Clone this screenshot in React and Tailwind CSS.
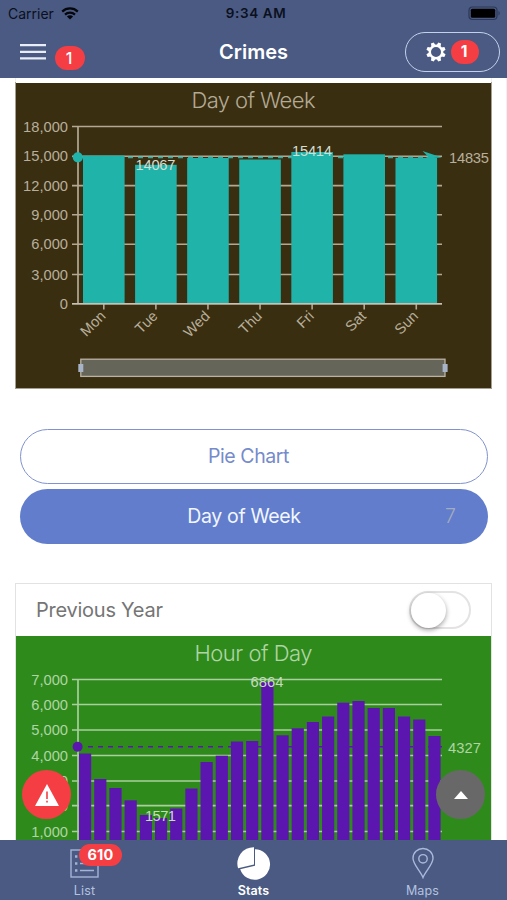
import React from 'react';

const DAYS = [
  ['Mon', 155.5],
  ['Tue', 164.8],
  ['Wed', 158],
  ['Thu', 159.5],
  ['Fri', 152],
  ['Sat', 154.3],
  ['Sun', 157.8],
];

const DAY_TICKS = [
  ['18,000', 126.5],
  ['15,000', 156.3],
  ['12,000', 185.6],
  ['9,000', 214.8],
  ['6,000', 244.3],
  ['3,000', 274.5],
  ['0', 303.8],
];

const HOUR_TOPS = [
  753.5, 779, 788, 800.3, 815, 818, 808.5, 788.5, 762, 755.7, 741.5, 741,
  682, 735.3, 728.3, 722, 716.5, 702.7, 701, 708, 708, 716.5, 719.5, 736,
];

const HOUR_TICKS = [
  ['7,000', 679.5],
  ['6,000', 704.5],
  ['5,000', 730],
  ['4,000', 755.5],
  ['3,000', 781],
  ['2,000', 805.7],
  ['1,000', 831.5],
];

function DayChart() {
  return (
    <svg viewBox="16 83 475 305" className='block h-[305px] w-[475px] bg-[#3a2e10] font-["Liberation_Sans",sans-serif]'>
      <text x="253.5" y="108" textAnchor="middle" textLength="124" className='fill-[#b3aa96] font-["Inter",sans-serif] text-[22px] font-light'>Day of Week</text>
      {DAY_TICKS.map(([label, y]) => (
        <g key={label}>
          <text x="68" y={y + 5} textAnchor="end" className="fill-[#b8ae9c] text-[14.7px]">{label}</text>
          <line x1="72" x2="442" y1={y} y2={y} stroke="#b4a894" strokeWidth="1.6" />
        </g>
      ))}
      <line x1="78" x2="78" y1="126" y2="304" stroke="#b4a894" strokeWidth="1.7" />
      {DAYS.map(([label, top], i) => {
        const x = 83 + i * 52.08;
        return (
          <g key={label}>
            <rect x={x} y={top} width="41.6" height={303.2 - top} fill="#1fb3aa" />
            <line x1={x + 20.8} x2={x + 20.8} y1="304" y2="309.5" stroke="#b4a894" strokeWidth="1.6" />
            <text transform={`translate(${x + 23.5} 317) rotate(-45)`} textAnchor="end" className="fill-[#b8ae9c] text-[14.7px]">{label}</text>
          </g>
        );
      })}
      <line x1="72" x2="442" y1="303.8" y2="303.8" stroke="#c9c2b4" strokeWidth="1.6" />
      <line x1="78" x2="424" y1="157.5" y2="157.5" stroke="#1fb3aa" strokeWidth="1.7" strokeDasharray="5 5" />
      <circle cx="77.8" cy="157.3" r="5.1" fill="#1fb3aa" />
      <path d="M422.5 151 442 157.5 425 158.5 428 156.5Z" fill="#1fb3aa" />
      <text x="155.5" y="169.7" textAnchor="middle" textLength="40" className="fill-[#d3ddd2] text-[14.7px]">14067</text>
      <text x="312" y="156" textAnchor="middle" textLength="40" className="fill-[#d3ddd2] text-[14.7px]">15414</text>
      <text x="449" y="162.5" textLength="40" className="fill-[#b8ae9c] text-[14.7px]">14835</text>
      <rect x="80.8" y="359.2" width="364.2" height="17.2" fill="#66655a" stroke="#bbb2a5" strokeWidth="1.3" />
      <rect x="78.3" y="364" width="5" height="8" fill="#a7b4c8" />
      <rect x="442.6" y="364" width="5" height="8" fill="#a7b4c8" />
    </svg>
  );
}

function HourChart() {
  return (
    <svg viewBox="16 636 475 204" className='block h-[204px] w-[475px] bg-[#2f8a1c] font-["Liberation_Sans",sans-serif]'>
      <text x="253.5" y="661" textAnchor="middle" textLength="118" className='fill-[#b0d5a5] font-["Inter",sans-serif] text-[22px] font-light'>Hour of Day</text>
      {HOUR_TICKS.map(([label, y]) => (
        <g key={label}>
          <text x="68" y={y + 5} textAnchor="end" className="fill-[#b0d5a5] text-[14.7px]">{label}</text>
          <line x1="72" x2="442" y1={y} y2={y} stroke="#a8cf9d" strokeWidth="1.7" />
        </g>
      ))}
      <line x1="78" x2="78" y1="679" y2="840" stroke="#a8cf9d" strokeWidth="1.7" />
      {HOUR_TOPS.map((top, i) => (
        <rect key={i} x={79 + i * 15.19} y={top} width="12.2" height={841 - top} fill="#5c16b0" />
      ))}
      <line x1="88" x2="442" y1="746.7" y2="746.7" stroke="#5c16b0" strokeWidth="1.6" strokeDasharray="5 5" />
      <circle cx="77.6" cy="746.8" r="5" fill="#5c16b0" />
      <text x="267" y="687" textAnchor="middle" textLength="33" className="fill-[#c6dcc0] text-[14.7px]">6864</text>
      <text x="160.5" y="821.3" textAnchor="middle" textLength="31" className="fill-[#c6dcc0] text-[14.7px]">1571</text>
      <text x="448" y="752.5" textLength="33" className="fill-[#b0d5a5] text-[14.7px]">4327</text>
    </svg>
  );
}

function StatusBar() {
  return (
    <div className="grid h-[26px] grid-cols-3 items-center pt-px text-[13.5px] text-[#0b1020]">
      <div className="flex items-center gap-[7px] pl-2">
        <span className="text-[14px]">Carrier</span>
        <svg viewBox="0 0 18 13" className="h-[13px] w-[18px]" fill="none" stroke="#05070d" strokeWidth="2.2">
          <path d="M1.2 4.6a11.2 11.2 0 0 1 15.6 0M4 7.6a7.2 7.2 0 0 1 10 0" />
          <path d="M9 12.6 5.9 9.6a4.4 4.4 0 0 1 6.2 0Z" fill="#05070d" stroke="none" />
        </svg>
      </div>
      <div className="pl-[5px] text-center font-semibold tracking-[0.6px]">9:34 AM</div>
      <div className="flex justify-end pr-[6px]">
        <svg viewBox="0 0 33 15" className="h-[15px] w-[33px]">
          <rect x="1" y="1" width="28" height="12.5" rx="3.5" fill="none" stroke="#2c3858" strokeWidth="1.2" />
          <rect x="2.8" y="2.8" width="24.4" height="9" rx="1.5" fill="#000" />
          <path d="M30.5 5v4.6c1.6-.6 1.6-4 0-4.6Z" fill="#2c3858" />
        </svg>
      </div>
    </div>
  );
}

function GearIcon() {
  return (
    <svg viewBox="-10 -10 20 20" className="h-5 w-5">
      <circle r="6.2" fill="none" stroke="#fff" strokeWidth="2.4" />
      {[22.5, 67.5, 112.5, 157.5, 202.5, 247.5, 292.5, 337.5].map((a) => (
        <path key={a} d="M-2.2 -6.5-1.5 -9.7H1.5L2.2 -6.5Z" fill="#fff" transform={`rotate(${a})`} />
      ))}
    </svg>
  );
}

function NavBar() {
  return (
    <div className="grid h-[51px] grid-cols-[160px_1fr_160px] items-center">
      <div className="flex items-center pl-5">
        <svg viewBox="0 0 26 16" className="h-4 w-[26px]" stroke="#e8edf8" strokeWidth="2.2">
          <path d="M0 1.2h26M0 7.8h26M0 14.4h26" />
        </svg>
        <span className="mt-[13px] ml-[9px] flex h-6 w-[30px] items-center justify-center rounded-full bg-[#f43e43] pr-[2px] text-[16px] font-medium text-white">1</span>
      </div>
      <div className="text-center text-[20px] font-semibold text-white">Crimes</div>
      <div className="flex justify-end pr-[7px]">
        <button className="flex h-10 w-[95px] items-center justify-center gap-[5px] rounded-full border-[1.5px] border-[#c3d2ec] pr-px">
          <GearIcon />
          <span className="flex h-6 w-7 items-center justify-center rounded-full bg-[#f43e43] pr-px text-[15.5px] font-bold text-white">1</span>
        </button>
      </div>
    </div>
  );
}

function TabBar() {
  return (
    <nav className="grid h-[60px] grid-cols-3 bg-[#4a5a82] text-[12.5px] tracking-[0.15px] text-[#b4c2e0]">
      <div className="relative flex flex-col items-center pt-[9px]">
        <svg viewBox="0 0 29 29" className="h-[29px] w-[29px]" fill="none" stroke="#a4b4d8" strokeWidth="1.4">
          <rect x="1" y="1" width="27" height="27" />
          <path d="M10 7.5h14M10 14.5h14M10 21.5h14" />
          <path d="M5 7.5h2.4M5 14.5h2.4M5 21.5h2.4" strokeWidth="2.4" />
        </svg>
        <span className="mt-[4px] leading-[18px]">List</span>
        <span className="absolute top-[4px] left-[79px] flex h-[22px] w-[43px] items-center justify-center rounded-full bg-[#f43e43] text-[14.5px] font-bold text-white">610</span>
      </div>
      <div className="flex flex-col items-center pt-[6px] font-semibold text-white">
        <svg viewBox="237 846 34 34" className="h-[34px] w-[34px]">
          <path d="M255 849.2a15.3 15.3 0 1 1-14.8 20L255 865.7Z" fill="#fff" />
          <path d="M254 847.2v17.4l-15.9 3.7a16.2 16.2 0 0 1 15.9-21.1Z" fill="#fff" />
        </svg>
        <span className="mt-[2px] leading-[18px]">Stats</span>
      </div>
      <div className="flex flex-col items-center pt-[7px]">
        <svg viewBox="0 0 24 32" className="h-8 w-6" fill="none" stroke="#a9b9dc" strokeWidth="1.4">
          <path d="M12 30.5C9.5 24 2 17.5 2 11.3a10 9.8 0 0 1 20 0C22 17.5 14.5 24 12 30.5Z" />
          <circle cx="12" cy="11.8" r="4.2" />
        </svg>
        <span className="mt-[3px] leading-[18px]">Maps</span>
      </div>
    </nav>
  );
}

export default function App() {
  return (
    <div className='relative flex h-[900px] w-[507px] flex-col overflow-hidden bg-white font-["Inter",sans-serif]'>
      <header className="h-[78px] shrink-0 bg-[#4a5a82]">
        <StatusBar />
        <NavBar />
      </header>

      <main className="flex h-[762px] shrink-0 flex-col overflow-hidden border-r border-[#f0f0f2]">
        <section className="ml-[15px] w-[477px] border border-t-0 border-[#b9b5aa] pt-[5px] [border-image:linear-gradient(to_bottom,#eee_5px,#a59f92_5px)_1]">
          <DayChart />
        </section>

        <div className="mt-10 ml-5 flex w-[468px] flex-col gap-[5px] text-[19.5px]">
          <button className="flex h-[55px] items-center justify-center rounded-full border-[1.5px] border-[#8093d0] pr-[11px] text-[#758bcb]">
            <span className="tracking-[-0.4px]">Pie Chart</span>
          </button>
          <button className="grid h-[55px] grid-cols-[1fr_auto_1fr] items-center rounded-full bg-[#617dcc] text-[#f2f6ff]">
            <span />
            <span className="-translate-x-[10px] tracking-[-0.35px]">Day of Week</span>
            <span className="pr-8 text-right font-light text-[#a3abc0]">7</span>
          </button>
        </div>

        <section className="mt-[39px] ml-[15px] w-[477px] shrink-0 border border-[#e2e2e2] bg-white">
          <div className="flex h-[52px] items-center justify-between pr-5 pl-5">
            <span className="text-[20px] tracking-[-0.25px] text-[#757575]">Previous Year</span>
            <span className="flex h-[38px] w-[62px] items-center rounded-full border-2 border-[#e3e3e3] bg-white">
              <span className="h-[35px] w-[35px] rounded-full bg-white shadow-[0_2px_5px_rgba(0,0,0,0.38)]" />
            </span>
          </div>
          <HourChart />
        </section>
      </main>

      <button className="absolute top-[770px] left-[22px] flex h-[49px] w-[49px] items-center justify-center rounded-full bg-[#f43e43]">
        <svg viewBox="0 0 24 22" className="h-[22px] w-6">
          <path d="M12 0 24 22H0Z" fill="#fff" />
          <path d="M12 7.5v7.5M12 16.8v1.8" stroke="#f43e43" strokeWidth="1.6" />
        </svg>
      </button>
      <button className="absolute top-[770px] left-[436px] flex h-[49px] w-[49px] items-center justify-center rounded-full bg-[#686868]">
        <svg viewBox="0 0 14 8" className="h-2 w-[14px]">
          <path d="M7 0 14 8H0Z" fill="#fff" />
        </svg>
      </button>

      <TabBar />
    </div>
  );
}
